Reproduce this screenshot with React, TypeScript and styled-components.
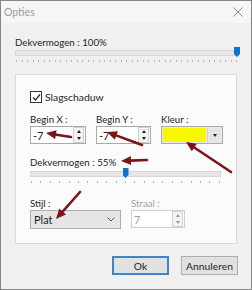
import React from "react";
import styled, { createGlobalStyle } from "styled-components";

const GlobalStyle = createGlobalStyle`
  html, body {
    margin: 0;
    padding: 0;
    background: #ffffff;
  }
  body {
    font-family: Lato, "Noto Sans", sans-serif;
  }
`;

const Window = styled.div`
  position: relative;
  width: 252px;
  height: 290px;
  box-sizing: border-box;
  border: 1px solid #858585;
  background: #f0f0f0;
  display: flex;
  flex-direction: column;
  font-size: 9.7px;
  color: #1e1e1e;
`;

const TitleBar = styled.div`
  height: 22px;
  flex: none;
  display: flex;
  align-items: center;
  justify-content: space-between;
  padding: 0 8px 0 3px;
  background: #f6f6f6;
  color: #9c9c9c;
  font-size: 10.5px;
`;

const Body = styled.div`
  flex: 1;
  display: flex;
  flex-direction: column;
  padding: 12px 13px 0 14px;
`;

const Label = styled.div<{ $disabled?: boolean }>`
  height: 14px;
  line-height: 14px;
  white-space: nowrap;
  color: ${(p) => (p.$disabled ? "#a2a2a2" : "#1e1e1e")};
`;

const SliderWrap = styled.div`
  position: relative;
  padding-top: 1px;
`;

const Track = styled.div`
  height: 4px;
  background: #e7e7e7;
  border: 1px solid #d6d6d6;
`;

const Thumb = styled.div`
  position: absolute;
  top: -2px;
  width: 6px;
  height: 10px;
  margin-left: -3px;
  background: #0a74d0;
  clip-path: polygon(0 0, 100% 0, 100% 70%, 50% 100%, 0 70%);
`;

const Ticks = styled.div`
  display: flex;
  justify-content: space-between;
  margin-top: 4px;
  padding: 0 1px;
`;

const Tick = styled.span`
  width: 1px;
  height: 2px;
  background: #b3b3b3;
`;

const Group = styled.div`
  margin-top: 12px;
  margin-right: 1px;
  height: 170px;
  box-sizing: border-box;
  border: 1px solid #dadada;
  background: #fbfbfb;
  padding: 15px 14px 0 14px;
  display: flex;
  flex-direction: column;
`;

const CheckRow = styled.label`
  display: flex;
  align-items: center;
  gap: 3px;
  height: 14px;
  font-size: 10.4px;
`;

const CheckBox = styled.span`
  width: 10px;
  height: 10px;
  border: 1px solid #333333;
  background: #ffffff;
  display: flex;
  align-items: center;
  justify-content: center;
`;

const FieldGrid = styled.div<{ $cols: string; $top: number }>`
  display: grid;
  grid-template-columns: ${(p) => p.$cols};
  column-gap: 10px;
  margin-top: ${(p) => p.$top}px;
`;

const Field = styled.div`
  display: flex;
  flex-direction: column;
`;

const Box = styled.div<{ $disabled?: boolean }>`
  height: 18px;
  box-sizing: border-box;
  border: 1px solid ${(p) => (p.$disabled ? "#cfcfcf" : "#a9a9a9")};
  background: #ffffff;
  display: flex;
  align-items: center;
  padding: 0 1px 0 2px;
  color: ${(p) => (p.$disabled ? "#a2a2a2" : "#1e1e1e")};
`;

const BoxText = styled.span`
  flex: 1;
  font-size: 11px;
`;

const Spin = styled.div`
  width: 9px;
  height: 14px;
  border: 1px solid #d0d0d0;
  background: #f4f4f4;
  display: flex;
  flex-direction: column;
  justify-content: space-around;
  align-items: center;
`;

const Tri = styled.span<{ $up?: boolean; $color?: string }>`
  width: 0;
  height: 0;
  border-left: 2.5px solid transparent;
  border-right: 2.5px solid transparent;
  ${(p) =>
    p.$up
      ? `border-bottom: 3px solid ${p.$color || "#222"};`
      : `border-top: 3px solid ${p.$color || "#222"};`}
`;

const ColorBox = styled.div`
  height: 18px;
  box-sizing: border-box;
  border: 1px solid #a9a9a9;
  background: #e9e9e9;
  display: flex;
  padding: 1px;
  gap: 1px;
`;

const Swatch = styled.div`
  flex: 1;
  background: #f7f700;
`;

const DropBtn = styled.div`
  width: 13px;
  background: #e6e6e6;
  border-left: 1px solid #d0d0d0;
  display: flex;
  align-items: center;
  justify-content: center;
`;

const Opacity = styled.div`
  margin-top: 11px;
  margin-right: 1px;
  display: flex;
  flex-direction: column;
  gap: 1px;
`;

const Select = styled.div`
  height: 19px;
  box-sizing: border-box;
  border: 1px solid #adadad;
  background: #e5e5e5;
  display: flex;
  align-items: center;
  justify-content: space-between;
  padding: 0 5px 0 3px;
  font-size: 11px;
`;

const Footer = styled.div`
  display: flex;
  justify-content: flex-end;
  gap: 12px;
  margin-top: 12px;
`;

const Button = styled.div<{ $primary?: boolean }>`
  width: 57px;
  height: 19px;
  box-sizing: border-box;
  border: 1px solid ${(p) => (p.$primary ? "#3b86c6" : "#adadad")};
  box-shadow: ${(p) => (p.$primary ? "inset 0 0 0 1px #3b86c6" : "none")};
  background: #e1e1e1;
  display: flex;
  align-items: center;
  justify-content: center;
  font-size: 10.3px;
`;

const Overlay = styled.svg`
  position: absolute;
  top: -1px;
  left: -1px;
  pointer-events: none;
`;

function Slider({ value, ticks }: { value: number; ticks: number }) {
  return (
    <SliderWrap>
      <Track />
      <Thumb style={{ left: `calc(${value}% ${value > 50 ? "- 1px" : "+ 0px"})` }} />
      <Ticks>
        {Array.from({ length: ticks }).map((_, i) => (
          <Tick key={i} />
        ))}
      </Ticks>
    </SliderWrap>
  );
}

function NumberBox({ value, disabled }: { value: string; disabled?: boolean }) {
  return (
    <Box $disabled={disabled}>
      <BoxText>{value}</BoxText>
      <Spin>
        <Tri $up $color={disabled ? "#9a9a9a" : "#222"} />
        <Tri $color={disabled ? "#9a9a9a" : "#222"} />
      </Spin>
    </Box>
  );
}

const arrows: [number, number, number, number][] = [
  [71, 137, 46, 133],
  [142, 145, 107, 132],
  [231, 172, 186, 142],
  [147, 160, 121, 161],
  [80, 192, 56, 219],
];

function Arrow({ a }: { a: [number, number, number, number] }) {
  const [x1, y1, x2, y2] = a;
  const dx = x2 - x1;
  const dy = y2 - y1;
  const len = Math.hypot(dx, dy);
  const ux = dx / len;
  const uy = dy / len;
  const hl = 10;
  const hw = 4.5;
  const bx = x2 - ux * hl;
  const by = y2 - uy * hl;
  const pts = `${x2},${y2} ${bx - uy * hw},${by + ux * hw} ${bx + uy * hw},${by - ux * hw}`;
  return (
    <g>
      <line x1={x1} y1={y1} x2={bx + ux} y2={by + uy} stroke="#7c1518" strokeWidth={2.6} strokeLinecap="round" />
      <polygon points={pts} fill="#7c1518" />
    </g>
  );
}

export default function App() {
  return (
    <>
      <GlobalStyle />
      <Window>
        <TitleBar>
          <span>Opties</span>
          <svg width="10" height="10" viewBox="0 0 10 10">
            <path d="M0.5 0.5 L9.5 9.5 M9.5 0.5 L0.5 9.5" stroke="#8a8a8a" strokeWidth="1" />
          </svg>
        </TitleBar>
        <Body>
          <Label>Dekvermogen : 100%</Label>
          <Slider value={100} ticks={41} />
          <Group>
            <CheckRow>
              <CheckBox>
                <svg width="9" height="9" viewBox="0 0 9 9">
                  <path d="M1 4.5 L3.5 7 L8 1.5" stroke="#222" strokeWidth="1.2" fill="none" />
                </svg>
              </CheckBox>
              <span>Slagschaduw</span>
            </CheckRow>
            <FieldGrid $cols="56px 55px 62px" $top={8}>
              <Field>
                <Label>Begin X :</Label>
                <NumberBox value="-7" />
              </Field>
              <Field>
                <Label>Begin Y :</Label>
                <NumberBox value="-7" />
              </Field>
              <Field>
                <Label>Kleur :</Label>
                <ColorBox>
                  <Swatch />
                  <DropBtn>
                    <Tri />
                  </DropBtn>
                </ColorBox>
              </Field>
            </FieldGrid>
            <Opacity>
              <Label>Dekvermogen : 55%</Label>
              <Slider value={50} ticks={21} />
            </Opacity>
            <FieldGrid $cols="91px 54px" $top={13}>
              <Field>
                <Label>Stijl :</Label>
                <Select>
                  <span>Plat</span>
                  <svg width="8" height="5" viewBox="0 0 8 5">
                    <path d="M0.5 0.5 L4 4 L7.5 0.5" stroke="#555" strokeWidth="1" fill="none" />
                  </svg>
                </Select>
              </Field>
              <Field>
                <Label $disabled>Straal :</Label>
                <NumberBox value="7" disabled />
              </Field>
            </FieldGrid>
          </Group>
          <Footer>
            <Button $primary>Ok</Button>
            <Button>Annuleren</Button>
          </Footer>
        </Body>
        <Overlay width="252" height="290" viewBox="0 0 252 290">
          {arrows.map((a, i) => (
            <Arrow key={i} a={a} />
          ))}
        </Overlay>
      </Window>
    </>
  );
}
